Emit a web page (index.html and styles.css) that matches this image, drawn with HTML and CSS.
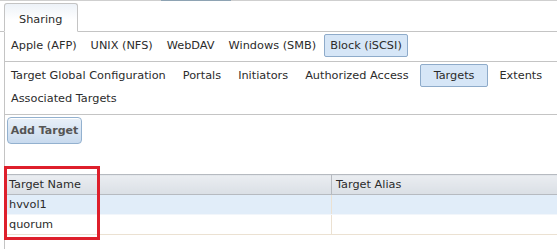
FILE: index.html
```html
<!DOCTYPE html>
<html lang="en">
<head>
  <meta charset="UTF-8">
  <title>Sharing - Block (iSCSI) - Targets</title>
  <link rel="stylesheet" href="styles.css">
</head>
<body>

  <div class="top-line"><span class="top-mark"></span></div>

  <div class="tab-bar">
    <div class="main-tab">Sharing</div>
  </div>

  <div class="panel">
    <div class="sub-tabs">
      <span class="sub-tab">Apple (AFP)</span>
      <span class="sub-tab">UNIX (NFS)</span>
      <span class="sub-tab">WebDAV</span>
      <span class="sub-tab">Windows (SMB)</span>
      <span class="sub-tab active">Block (iSCSI)</span>
    </div>

    <div class="sub-tabs second">
      <span class="sub-tab">Target Global Configuration</span>
      <span class="sub-tab">Portals</span>
      <span class="sub-tab">Initiators</span>
      <span class="sub-tab">Authorized Access</span>
      <span class="sub-tab active wide">Targets</span>
      <span class="sub-tab">Extents</span>
      <span class="sub-tab">Associated Targets</span>
    </div>

    <div class="toolbar">
      <button class="add-btn">Add Target</button>
    </div>

    <div class="grid-wrap">
      <table class="grid">
        <thead>
          <tr>
            <th class="col-name">Target Name</th>
            <th>Target Alias</th>
          </tr>
        </thead>
        <tbody>
          <tr class="selected">
            <td>hvvol1</td>
            <td></td>
          </tr>
          <tr>
            <td>quorum</td>
            <td></td>
          </tr>
        </tbody>
      </table>
      <div class="highlight"></div>
    </div>
  </div>

</body>
</html>
```

FILE: styles.css
```css
:root {
  --line: #c4c4c4;
  --text: #2b2b2b;
  --btn-bg: #d6e6f7;
  --btn-border: #8eabca;
  --row-sel: #e1edf9;
  --cell-line: #ebe1d2;
}

body {
  margin: 0;
  font-family: 'DejaVu Sans', sans-serif;
  font-size: 11.3px;
  color: var(--text);
  background: #fff;
  overflow: hidden;
}

.top-line {
  height: 1px;
  background: #cfcfcf;
}

.top-mark {
  display: block;
  margin-left: 161px;
  width: 70px;
  height: 1px;
  background: #8ea3b3;
}

.tab-bar {
  padding: 2px 0 0 4px;
  border-bottom: 1px solid var(--line);
  display: flex;
}

.main-tab {
  box-sizing: border-box;
  width: 74px;
  height: 29px;
  margin-bottom: -1px;
  padding: 9px 0 0 14px;
  border: 1px solid var(--line);
  border-bottom: 1px solid #fff;
  border-radius: 3px 3px 0 0;
  background: linear-gradient(#edf2f8, #fff 60%);
}

.panel {
  margin-left: 4px;
  border-left: 1px solid var(--line);
  min-height: 217px;
}

.sub-tabs {
  display: flex;
  flex-wrap: wrap;
  column-gap: 2px;
  padding: 2px 0 4px 0;
  border-bottom: 1px solid var(--line);
}

.sub-tabs.second {
  column-gap: 5px;
}

.sub-tab {
  height: 21px;
  line-height: 21px;
  padding: 0 5px;
  border: 1px solid transparent;
  border-radius: 2px;
  white-space: nowrap;
}

.sub-tab.active {
  background: var(--btn-bg);
  border-color: var(--btn-border);
}

.sub-tab.wide {
  padding: 0 13px;
}

.toolbar {
  padding: 2px 0 0 2px;
}

.add-btn {
  width: 75px;
  height: 27px;
  padding: 0;
  font-family: inherit;
  font-size: 11px;
  font-weight: bold;
  color: #555;
  border: 1px solid #93b1cf;
  border-radius: 4px;
  background: linear-gradient(#e9f0f8, #c8daee);
  box-shadow: inset 0 1px 0 #fff;
}

.grid-wrap {
  position: relative;
  margin-top: 30px;
}

.grid {
  width: 100%;
  border-collapse: collapse;
}

.grid th,
.grid td {
  height: 19px;
  padding: 0 0 0 4px;
  text-align: left;
  font-weight: normal;
  white-space: nowrap;
}

.grid th {
  background: linear-gradient(#eaedf1, #dadfe5);
  border-top: 1px solid #b6bac0;
  border-bottom: 1px solid #b6bac0;
}

.grid th.col-name {
  width: 322px;
  border-right: 1px solid #b6bac0;
}

.grid td {
  border-bottom: 1px solid var(--cell-line);
}

.grid td:first-child {
  border-right: 1px solid var(--cell-line);
}

.grid tr.selected td {
  background: var(--row-sel);
  border-bottom-color: #f2f6fb;
}

.highlight {
  position: absolute;
  left: -1px;
  top: -8px;
  width: 90px;
  height: 68px;
  border: 3px solid #de1f2b;
}
```
